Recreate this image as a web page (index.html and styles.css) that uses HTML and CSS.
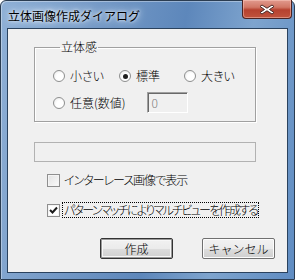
FILE: index.html
```html
<!DOCTYPE html>
<html lang="ja">
<head>
    <meta charset="UTF-8">
    <meta name="viewport" content="width=device-width, initial-scale=1.0">
    <title>立体画像作成ダイアログ</title>
    <link rel="stylesheet" href="styles.css">
</head>
<body>
    <div class="window">
        <div class="title-bar">
            <span class="title-text">立体画像作成ダイアログ</span>
            <button class="close-button" aria-label="閉じる">
                <svg width="16" height="11" viewBox="0 0 16 11">
                    <path d="M3 1 L8 4.2 L13 1 L15 2.5 L10.5 5.5 L15 8.5 L13 10 L8 6.8 L3 10 L1 8.5 L5.5 5.5 L1 2.5 Z" fill="#fff" stroke="#4b2a28" stroke-width="1" stroke-linejoin="round"/>
                </svg>
            </button>
        </div>

        <div class="client">
            <fieldset class="group">
                <legend>立体感</legend>
                <div class="radio-row">
                    <label class="radio col-1"><span class="radio-mark"></span>小さい</label>
                    <label class="radio col-2"><span class="radio-mark checked"></span>標準</label>
                    <label class="radio"><span class="radio-mark"></span>大きい</label>
                </div>
                <div class="radio-row custom-row">
                    <label class="radio"><span class="radio-mark"></span>任意(数値)</label>
                    <div class="edit-box">0</div>
                </div>
            </fieldset>

            <div class="progress-box"></div>

            <div class="check-list">
                <label class="check"><span class="check-mark"></span>インターレース画像で表示</label>
                <label class="check"><span class="check-mark checked">
                    <svg width="9" height="8" viewBox="0 0 9 8">
                        <path d="M1 4 L3.5 6.5 L8 1.5" fill="none" stroke="#1b1b1b" stroke-width="2"/>
                    </svg>
                </span><span class="focus-text">パターンマッチによりマルチビューを作成する</span></label>
            </div>

            <div class="button-row">
                <button class="push-button default">作成</button>
                <button class="push-button">キャンセル</button>
            </div>
        </div>
    </div>
</body>
</html>
```

FILE: styles.css
```css
* {
    margin: 0;
    padding: 0;
    box-sizing: border-box;
}

body {
    font-family: "Noto Sans CJK JP", "Noto Sans", sans-serif;
    font-size: 12px;
    font-weight: 300;
    color: #000;
    background: #fff;
}

.window {
    width: 295px;
    height: 280px;
    border: 1px solid #2b3d52;
    border-radius: 6px 6px 0 0;
    background: linear-gradient(100deg, #8fb0d6 0%, #7499c6 30%, #5d87bb 55%, #7ea4ce 75%, #5f8cc2 100%);
    display: flex;
    flex-direction: column;
    padding: 0 6px 6px;
    box-shadow: inset 1px 1px 0 rgba(255, 255, 255, 0.35);
}

.title-bar {
    height: 27px;
    display: flex;
    align-items: flex-start;
    justify-content: space-between;
}

.title-text {
    margin: 8px 0 0 1px;
    font-size: 12px;
    font-weight: 400;
    line-height: 14px;
    color: #000;
    text-shadow: 0 0 6px #dbe7f4, 0 0 10px #dbe7f4, 0 0 3px #eef4fb;
}

.close-button {
    width: 50px;
    height: 19px;
    margin: -1px -4px 0 0;
    border: 1px solid #4b2323;
    border-top: none;
    border-radius: 0 0 4px 4px;
    background: linear-gradient(#e19a8e 0%, #d17766 40%, #b6412f 55%, #c0533d 100%);
    box-shadow: inset 0 0 0 1px rgba(255, 210, 200, 0.45);
    display: flex;
    align-items: center;
    justify-content: center;
}

.client {
    flex: 1;
    border: 1px solid #2a425e;
    background: #f0f0f0;
    padding: 11px 0 0 26px;
}

.group {
    width: 222px;
    border: 1px solid #a0a0a0;
    box-shadow: 1px 1px 0 #fff, inset 1px 1px 0 #fff;
    padding: 15px 0 8px 18px;
    margin: 0;
    min-width: 0;
}

.group legend {
    margin-left: 7px;
    padding: 0 1px 0 1px;
    line-height: 14px;
}

.radio-row {
    display: flex;
    align-items: center;
}

.custom-row {
    margin-top: 9px;
}

.radio {
    display: flex;
    align-items: center;
    line-height: 14px;
    font-feature-settings: "palt";
}

.col-1 {
    width: 66px;
}

.col-2 {
    width: 65px;
}

.radio-mark {
    width: 12px;
    height: 12px;
    border-radius: 50%;
    border: 1px solid #8e8f8f;
    background: radial-gradient(circle at 60% 60%, #fff 40%, #e4e4e4 100%);
    margin-right: 5px;
    display: flex;
    align-items: center;
    justify-content: center;
}

.radio-mark.checked::after {
    content: "";
    width: 5px;
    height: 5px;
    border-radius: 50%;
    background: #1f1f1f;
}

.edit-box {
    width: 41px;
    height: 21px;
    margin-left: 21px;
    border: 1px solid;
    border-color: #a0a0a0 #fff #fff #a0a0a0;
    box-shadow: inset 1px 1px 0 #696969;
    background: #f0f0f0;
    color: #7d7d7d;
    padding: 3px 0 0 4px;
    line-height: 14px;
}

.progress-box {
    width: 222px;
    height: 20px;
    margin-top: 20px;
    border: 1px solid #b2b2b2;
    background: #f0f0f0;
}

.check-list {
    display: flex;
    flex-direction: column;
    gap: 12px;
    margin: 9px 0 0 13px;
}

.check {
    display: flex;
    align-items: center;
    height: 18px;
    line-height: 14px;
    white-space: nowrap;
    font-feature-settings: "palt";
    letter-spacing: -1px;
}

.check-mark {
    width: 13px;
    height: 13px;
    border: 1px solid #8f8f8f;
    background: linear-gradient(135deg, #e2e2e2 0%, #fbfbfb 100%);
    box-shadow: inset 0 0 0 1px #f4f4f4;
    margin-right: 4px;
    display: flex;
    align-items: center;
    justify-content: center;
}

.check-mark.checked {
    background: #fff;
    margin-right: 3px;
}

.check-mark svg {
    display: block;
}

.focus-text {
    outline: 1px dotted #000;
    padding: 0 1px;
    letter-spacing: -1.7px;
}

.button-row {
    display: flex;
    gap: 29px;
    margin: 19px 0 0 66px;
}

.push-button {
    width: 73px;
    height: 21px;
    font-family: inherit;
    font-size: 12px;
    font-weight: 300;
    line-height: 14px;
    color: #000;
    border: 1px solid #707070;
    border-radius: 2px;
    background: linear-gradient(#f2f2f2 0%, #ebebeb 50%, #dddddd 51%, #cfcfcf 100%);
    box-shadow: inset 0 0 0 1px #fcfcfc;
}

.push-button.default {
    border-color: #333;
    box-shadow: inset 0 0 0 1px #9a9a9a, inset 0 0 0 2px #f7f7f7;
}
```
